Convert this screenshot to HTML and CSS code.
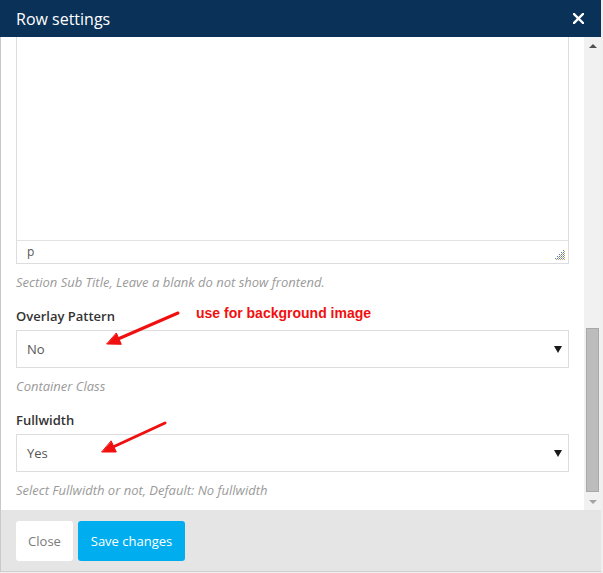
FILE: index.html
```html
<!DOCTYPE html>
<html>
<head>
<meta charset="utf-8">
<title>Row settings</title>
<link rel="stylesheet" href="styles.css">
</head>
<body>
<div class="modal">
  <div class="modal-header">
    <h4 class="modal-title">Row settings</h4>
    <button class="close" type="button" aria-label="Close">
      <svg width="11" height="11" viewBox="0 0 11 11"><path d="M1 1 L10 10 M10 1 L1 10" stroke="#fff" stroke-width="2.4" stroke-linecap="square"/></svg>
    </button>
  </div>
  <div class="modal-main">
    <div class="modal-body">
      <div class="editor">
        <div class="editor-area"></div>
        <div class="editor-status">
          <span class="path">p</span>
          <svg class="grip" width="10" height="10" viewBox="0 0 10 10">
            <g fill="#5a7bb0">
              <rect x="8" y="0" width="1" height="1"/>
              <rect x="6" y="2" width="1" height="1"/><rect x="8" y="2" width="1" height="1"/>
              <rect x="4" y="4" width="1" height="1"/><rect x="6" y="4" width="1" height="1"/><rect x="8" y="4" width="1" height="1"/>
              <rect x="2" y="6" width="1" height="1"/><rect x="4" y="6" width="1" height="1"/><rect x="6" y="6" width="1" height="1"/><rect x="8" y="6" width="1" height="1"/>
              <rect x="0" y="8" width="1" height="1"/><rect x="2" y="8" width="1" height="1"/><rect x="4" y="8" width="1" height="1"/><rect x="6" y="8" width="1" height="1"/><rect x="8" y="8" width="1" height="1"/>
            </g>
            <g fill="#b8a878">
              <rect x="9" y="1" width="1" height="1"/><rect x="7" y="3" width="1" height="1"/><rect x="9" y="3" width="1" height="1"/>
              <rect x="5" y="5" width="1" height="1"/><rect x="7" y="5" width="1" height="1"/><rect x="9" y="5" width="1" height="1"/>
              <rect x="3" y="7" width="1" height="1"/><rect x="5" y="7" width="1" height="1"/><rect x="7" y="7" width="1" height="1"/><rect x="9" y="7" width="1" height="1"/>
              <rect x="1" y="9" width="1" height="1"/><rect x="3" y="9" width="1" height="1"/><rect x="5" y="9" width="1" height="1"/><rect x="7" y="9" width="1" height="1"/><rect x="9" y="9" width="1" height="1"/>
            </g>
          </svg>
        </div>
      </div>
      <p class="help">Section Sub Title, Leave a blank do not show frontend.</p>

      <div class="field">
        <label class="field-label">Overlay Pattern</label>
        <div class="select"><span>No</span><i class="caret"></i></div>
        <p class="help">Container Class</p>
      </div>

      <div class="field">
        <label class="field-label">Fullwidth</label>
        <div class="select"><span>Yes</span><i class="caret"></i></div>
        <p class="help">Select Fullwidth or not, Default: No fullwidth</p>
      </div>
    </div>
    <div class="scrollbar">
      <div class="sb-btn"><i class="sb-up"></i></div>
      <div class="sb-track"><div class="sb-thumb"></div></div>
      <div class="sb-btn"><i class="sb-down"></i></div>
    </div>
  </div>
  <div class="modal-footer">
    <button class="btn btn-default" type="button">Close</button>
    <button class="btn btn-primary" type="button">Save changes</button>
  </div>

  <div class="note">use for background image</div>
  <svg class="arrows" width="601" height="573" viewBox="0 0 601 573">
    <g stroke="#f01010" stroke-width="3" stroke-linecap="round" fill="#f01010">
      <line x1="178" y1="313" x2="118" y2="339"/>
      <polygon points="107,344 121.3,344.3 116.5,333.3" stroke-width="1" stroke-linejoin="round"/>
      <line x1="165" y1="423" x2="113" y2="447"/>
      <polygon points="102,452 116.3,452 111.3,441.2" stroke-width="1" stroke-linejoin="round"/>
    </g>
  </svg>
</div>
</body>
</html>
```

FILE: styles.css
```css
* { box-sizing: border-box; }

html, body {
  margin: 0;
  padding: 0;
  background: #efefef;
  font-family: "Open Sans", "Noto Sans", sans-serif;
}

.modal {
  position: relative;
  width: 601px;
  background: #fff;
  border-left: 1px solid #c9c9c9;
  border-bottom: 1px solid #cfcfcf;
}

.modal-header {
  height: 37px;
  margin-left: -1px;
  background: #0a3157;
  display: flex;
  align-items: center;
  justify-content: space-between;
  padding: 0 17px 0 16px;
}

.modal-title {
  margin: 0;
  color: #fff;
  font-size: 16px;
  font-weight: 400;
  line-height: 22px;
}

.close {
  background: none;
  border: 0;
  padding: 0;
  display: flex;
  cursor: pointer;
}

.modal-main {
  display: flex;
  height: 473px;
}

.modal-body {
  flex: 1;
  overflow: hidden;
  padding: 0 15px;
}

.editor {
  border: 1px solid #dddddd;
  border-top: 0;
}

.editor-area {
  height: 203px;
}

.editor-status {
  height: 23px;
  border-top: 1px solid #e3e3e3;
  display: flex;
  align-items: center;
  justify-content: space-between;
  padding: 0 3px 0 10px;
}

.path {
  font-size: 12px;
  color: #555;
  line-height: 16px;
}

.grip {
  margin-top: 6px;
}

.help {
  margin: 9px 0 0;
  font-size: 13px;
  line-height: 18px;
  font-style: italic;
  color: #9a9a9a;
}

.field {
  margin-top: 16px;
}

.field-label {
  display: block;
  font-size: 13px;
  font-weight: 600;
  line-height: 18px;
  color: #333;
  margin-bottom: 5px;
}

.select {
  height: 38px;
  border: 1px solid #dddddd;
  display: flex;
  align-items: center;
  justify-content: space-between;
  padding: 0 6px 0 10px;
  font-size: 13px;
  color: #555;
}

.caret {
  width: 0;
  height: 0;
  border-left: 4px solid transparent;
  border-right: 4px solid transparent;
  border-top: 7px solid #1a1a1a;
}

.scrollbar {
  width: 17px;
  background: #f1f1f1;
  display: flex;
  flex-direction: column;
}

.sb-btn {
  height: 17px;
  display: flex;
  align-items: center;
  justify-content: center;
}

.sb-up {
  width: 0;
  height: 0;
  border-left: 4px solid transparent;
  border-right: 4px solid transparent;
  border-bottom: 4px solid #505050;
}

.sb-down {
  width: 0;
  height: 0;
  border-left: 4px solid transparent;
  border-right: 4px solid transparent;
  border-top: 4px solid #a3a3a3;
}

.sb-track {
  flex: 1;
  padding: 274px 2px 0;
}

.sb-thumb {
  height: 164px;
  background: #bcbcbc;
  border: 1px solid #a8a8a8;
}

.modal-footer {
  height: 61px;
  background: #e5e5e5;
  display: flex;
  align-items: center;
  padding: 0 15px;
  gap: 5px;
}

.btn {
  height: 40px;
  border: 0;
  border-radius: 3px;
  font-family: "Open Sans", "Noto Sans", sans-serif;
  font-size: 13px;
  padding: 0;
  cursor: pointer;
}

.btn-default {
  width: 57px;
  background: #fff;
  color: #7a7a7a;
}

.btn-primary {
  width: 107px;
  background: #00aeef;
  color: #fff;
}

.note {
  position: absolute;
  left: 195px;
  top: 305px;
  font-family: "Liberation Sans", Arial, sans-serif;
  font-weight: 700;
  font-size: 14px;
  line-height: 16px;
  color: #f01010;
}

.arrows {
  position: absolute;
  left: -1px;
  top: 0;
  pointer-events: none;
}
```
